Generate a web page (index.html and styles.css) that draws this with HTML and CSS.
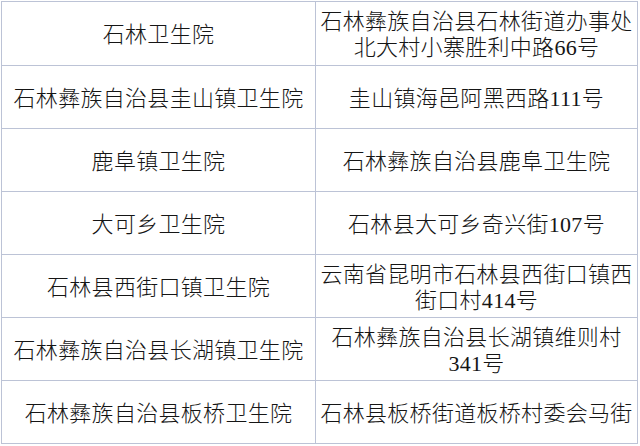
FILE: index.html
```html
<!DOCTYPE html>
<html lang="zh-CN">
<head>
<meta charset="utf-8">
<link rel="stylesheet" href="styles.css">
</head>
<body>
<div class="table">
  <div class="cell">石林卫生院</div>
  <div class="cell">石林彝族自治县石林街道办事处<br>北大村小寨胜利中路66号</div>
  <div class="cell">石林彝族自治县圭山镇卫生院</div>
  <div class="cell">圭山镇海邑阿黑西路111号</div>
  <div class="cell">鹿阜镇卫生院</div>
  <div class="cell">石林彝族自治县鹿阜卫生院</div>
  <div class="cell">大可乡卫生院</div>
  <div class="cell">石林县大可乡奇兴街107号</div>
  <div class="cell">石林县西街口镇卫生院</div>
  <div class="cell">云南省昆明市石林县西街口镇西<br>街口村414号</div>
  <div class="cell">石林彝族自治县长湖镇卫生院</div>
  <div class="cell">石林彝族自治县长湖镇维则村<br>341号</div>
  <div class="cell">石林彝族自治县板桥卫生院</div>
  <div class="cell">石林县板桥街道板桥村委会马街</div>
</div>
</body>
</html>
```
FILE: styles.css
```css
html, body {
  margin: 0;
  padding: 0;
  background: #ffffff;
}
body {
  width: 640px;
  height: 446px;
  overflow: hidden;
}
.table {
  margin: 1px 0 0 1px;
  display: grid;
  grid-template-columns: 314px 322px;
  grid-template-rows: 64px repeat(6, 63px);
  width: 637px;
  box-sizing: border-box;
  border-left: 1px solid #bcc3d6;
  border-top: 1px solid #bcc3d6;
}
.cell {
  box-sizing: border-box;
  border-right: 1px solid #bcc3d6;
  border-bottom: 1px solid #bcc3d6;
  display: flex;
  align-items: center;
  justify-content: center;
  text-align: center;
  padding: 3px 0 0;
  font-family: "Liberation Serif", "Noto Sans CJK SC", sans-serif;
  font-size: 22px;
  font-weight: 300;
  letter-spacing: 0.3px;
  line-height: 26px;
  color: #151515;
  white-space: nowrap;
}
```
